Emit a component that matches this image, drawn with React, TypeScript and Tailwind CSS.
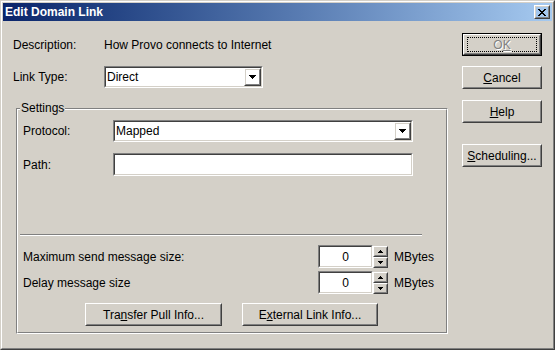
import type { ReactNode } from 'react';

function Raised({ className = '', children }: { className?: string; children?: ReactNode }) {
  return (
    <div className={`border border-t-white border-l-white border-r-[#404040] border-b-[#404040] ${className}`}>
      <div className="h-full w-full border border-t-[#d4d0c8] border-l-[#d4d0c8] border-r-[#808080] border-b-[#808080] flex items-center justify-center">
        {children}
      </div>
    </div>
  );
}

function Sunken({ className = '', children }: { className?: string; children?: ReactNode }) {
  return (
    <div className={`border border-t-[#808080] border-l-[#808080] border-r-white border-b-white ${className}`}>
      <div className="h-full w-full border border-t-[#404040] border-l-[#404040] border-r-[#d4d0c8] border-b-[#d4d0c8] bg-white flex items-center">
        {children}
      </div>
    </div>
  );
}

function DownArrow() {
  return (
    <svg width="7" height="4" viewBox="0 0 7 4" shapeRendering="crispEdges">
      <path d="M0 0h7v1h-1v1h-1v1h-1v1h-1v-1h-1v-1h-1v-1h-1z" fill="#000" />
    </svg>
  );
}

function Combo({ value, className = '' }: { value: string; className?: string }) {
  return (
    <Sunken className={className}>
      <span className="flex-1 pl-[1px] leading-none">{value}</span>
      <Raised className="w-[17px] h-full">
        <DownArrow />
      </Raised>
    </Sunken>
  );
}

function Spin({ value }: { value: string }) {
  return (
    <div className="flex items-center">
      <Sunken className="w-[55px] h-[23px]">
        <span className="flex-1 text-center leading-none">{value}</span>
      </Sunken>
      <div className="flex flex-col w-[15px] h-[22px]">
        <Raised className="h-[11px]">
          <svg width="5" height="3" viewBox="0 0 5 3" shapeRendering="crispEdges">
            <path d="M2 0h1v1h1v1h1v1h-5v-1h1v-1h1z" fill="#000" />
          </svg>
        </Raised>
        <Raised className="h-[11px]">
          <svg width="5" height="3" viewBox="0 0 5 3" shapeRendering="crispEdges">
            <path d="M0 0h5v1h-1v1h-1v1h-1v-1h-1v-1h-1z" fill="#000" />
          </svg>
        </Raised>
      </div>
      <span className="ml-[6px]">MBytes</span>
    </div>
  );
}

function CloseBtn() {
  return (
    <Raised className="w-[16px] h-[14px]">
      <svg width="8" height="7" viewBox="0 0 8 7" shapeRendering="crispEdges">
        <path
          d="M0 0h2v1h-2zM6 0h2v1h-2zM1 1h2v1h-2zM5 1h2v1h-2zM2 2h4v1h-4zM3 3h2v1h-2zM2 4h4v1h-4zM1 5h2v1h-2zM5 5h2v1h-2zM0 6h2v1h-2zM6 6h2v1h-2z"
          fill="#000"
        />
      </svg>
    </Raised>
  );
}

export default function App() {
  return (
    <div className="w-[555px] h-[350px] font-['Liberation_Sans',Arial,sans-serif] text-[12px] text-black">
      <div className="h-full border border-t-[#d4d0c8] border-l-[#d4d0c8] border-r-[#404040] border-b-[#404040]">
        <div className="h-full border border-t-white border-l-white border-r-[#808080] border-b-[#808080] bg-[#d4d0c8] p-px flex flex-col">
          {/* title bar */}
          <div className="h-[18px] bg-linear-to-r from-[#0a246a] to-[#a6caf0] flex items-center justify-between px-[2px]">
            <span className="text-white font-bold text-[12px] leading-none">Edit Domain Link</span>
            <CloseBtn />
          </div>

          <div className="flex flex-1">
            {/* left side */}
            <div className="w-[445px] pl-[10px]">
              <div className="mt-[16px] h-[16px] flex items-center">
                <span className="w-[91px]">Description:</span>
                <span>How Provo connects to Internet</span>
              </div>
              <div className="mt-[13px] flex items-center">
                <span className="w-[91px]">Link Type:</span>
                <Combo value="Direct" className="w-[159px] h-[22px]" />
              </div>

              {/* Settings group */}
              <div className="relative mt-[20px] ml-[3px] w-[432px] h-[226px] border border-t-[#808080] border-l-[#808080] border-r-white border-b-white">
                <span className="absolute left-[3px] -top-[8px] px-px bg-[#d4d0c8] leading-[14px]">Settings</span>
                <div className="h-full border border-t-white border-l-white border-r-[#808080] border-b-[#808080]">
                  <div className="mt-[10px] pl-[5px] flex items-center">
                    <span className="w-[90px]">Protocol:</span>
                    <Combo value="Mapped" className="w-[300px] h-[22px]" />
                  </div>
                  <div className="mt-[11px] pl-[5px] flex items-center">
                    <span className="w-[90px]">Path:</span>
                    <Sunken className="w-[300px] h-[23px]" />
                  </div>

                  <div className="mt-[58px] ml-[2px] w-[402px] border-t border-t-[#808080] border-b border-b-white" />

                  <div className="mt-[9px] pl-[5px] flex items-center">
                    <span className="w-[295px]">Maximum send message size:</span>
                    <Spin value="0" />
                  </div>
                  <div className="mt-[3px] pl-[5px] flex items-center">
                    <span className="w-[295px]">Delay message size</span>
                    <Spin value="0" />
                  </div>

                  <div className="mt-[9px] ml-[67px] flex gap-[20px]">
                    <Raised className="w-[137px] h-[23px]">
                      <span>Tra<span className="underline">n</span>sfer Pull Info...</span>
                    </Raised>
                    <Raised className="w-[136px] h-[23px]">
                      <span>E<span className="underline">x</span>ternal Link Info...</span>
                    </Raised>
                  </div>
                </div>
              </div>
            </div>

            {/* right buttons */}
            <div className="pl-[14px] pt-[12px] flex flex-col">
              <div className="w-[80px] h-[23px] border border-black">
                <Raised className="h-full">
                  <div className="w-[70px] h-[15px] border border-dotted border-black flex items-center justify-center">
                    <span className="text-[#808080] [text-shadow:1px_1px_0_#fff]">
                      O<span className="underline">K</span>
                    </span>
                  </div>
                </Raised>
              </div>
              <Raised className="mt-[10px] w-[80px] h-[23px]">
                <span><span className="underline">C</span>ancel</span>
              </Raised>
              <Raised className="mt-[11px] w-[80px] h-[23px]">
                <span><span className="underline">H</span>elp</span>
              </Raised>
              <Raised className="mt-[21px] w-[80px] h-[23px]">
                <span><span className="underline">S</span>cheduling...</span>
              </Raised>
            </div>
          </div>
        </div>
      </div>
    </div>
  );
}
